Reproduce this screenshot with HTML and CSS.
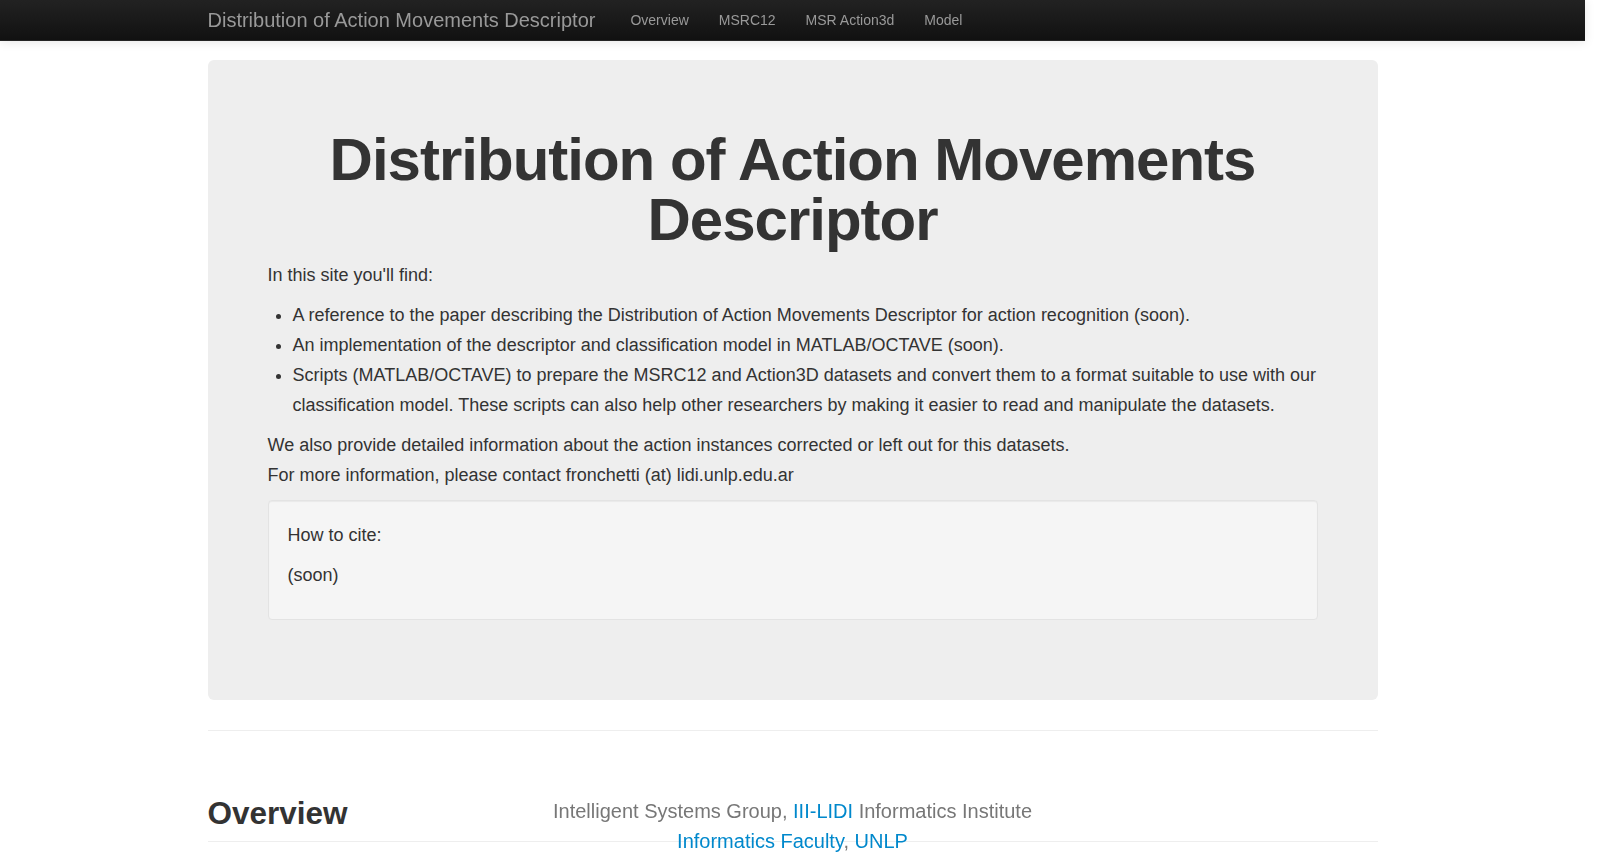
FILE: index.html
```html
<!doctype html>
<html lang="en">
<head>
<meta charset="UTF-8">
<title>Distribution of Action Movements Descriptor</title>
<link rel="stylesheet" href="styles.css">
</head>
<body>
	<div class="navbar">   <!-- barra superior fija -->
		<div class="navbar-inner">
			<div class="container">
				<a class="brand" href="#">Distribution of Action Movements Descriptor</a>
				<ul class="nav">
					<li><a href="#overview">Overview</a></li>
					<li><a href="#msrc12">MSRC12</a></li>
					<li><a href="#action3d">MSR Action3d</a></li>
					<li><a href="#model">Model</a></li>
				</ul>
			</div>
		</div>
	</div>

	<div class="container">

		<div class="hero-unit">
			<h1>Distribution of Action Movements Descriptor</h1>
			<p>In this site you'll find:</p>
			<ul>
				<li>A reference to the paper describing the Distribution of Action Movements Descriptor for action recognition (soon).</li>
				<li>An implementation of the descriptor and classification model in MATLAB/OCTAVE (soon).</li>
				<li>Scripts (MATLAB/OCTAVE) to prepare the MSRC12 and Action3D datasets and convert them to a format suitable to use with our classification model. These scripts can also help other researchers by making it easier to read and manipulate the datasets.</li>
			</ul>
			<p>We also provide detailed information about the action instances corrected or left out for this datasets.<br/>
			For more information, please contact fronchetti (at) lidi.unlp.edu.ar</p>
			<div class="well">
				<p>How to cite:</p>
				<p>(soon)</p>
			</div>
		</div>

		<hr/>

		<section id="overview" class="section">
			<div class="page-header"><h2>Overview</h2></div>
		</section>
		<section id="msrc12" class="section">
			<div class="page-header"><h2>MSRC12</h2></div>
		</section>
		<section id="action3d" class="section">
			<div class="page-header"><h2>MSR Action3d</h2></div>
		</section>
		<section id="model" class="section">
			<div class="page-header"><h2>Model</h2></div>
		</section>

	</div>

	<div class="footer">  <!-- pie fijo abajo -->
		<p class="lead">Intelligent Systems Group, <a href="#">III-LIDI</a> Informatics Institute<br/>
		<a href="#">Informatics Faculty</a>, <a href="#">UNLP</a></p>
	</div>
</body>
</html>
```

FILE: styles.css
```css
html,body,p,ul,h1,h2{ margin:0;padding:0; }
body{ padding:60px 15px 0 0;font:14px/20px "Liberation Sans",Arial,Helvetica,sans-serif;color:#333;background:#fff; }
a{ color:#0088cc;text-decoration:none; }
.container{ width:1170px;margin:0 auto; }

/* navbar */
.navbar{ position:fixed;top:0;left:0;right:15px;z-index:1030; }
.navbar-inner{ min-height:40px;background:#1b1b1b;background-image:linear-gradient(to bottom,#222,#111);border-bottom:1px solid #252525;box-shadow:0 1px 10px rgba(0,0,0,.1); }
.navbar .container{ display:flex;align-items:center; }
.brand{ display:block;padding:10px 20px;margin-left:-20px;font-size:20px;line-height:20px;color:#999; }
.nav{ display:flex;list-style:none; }
.nav a{ display:block;padding:10px 15px;font-size:14px;line-height:20px;color:#999; }

/* hero */
.hero-unit{ padding:60px;margin-bottom:30px;background:#eee;border-radius:6px;font-size:18px;line-height:30px; }
.hero-unit h1{ margin:10px 0;font-size:60px;line-height:60px;font-weight:bold;letter-spacing:-1px;text-align:center;color:#333; }
.hero-unit p{ margin:0 0 10px; }
.hero-unit ul{ margin:0 0 10px 25px; }
.well{ min-height:20px;padding:19px;margin-bottom:20px;background:#f5f5f5;border:1px solid #e3e3e3;border-radius:4px;box-shadow:inset 0 1px 1px rgba(0,0,0,.05); }

hr{ margin:20px 0;border:0;border-top:1px solid #eee;border-bottom:1px solid #fff; }

/* secciones */
.section{ padding-top:41px;min-height:390px; }
.page-header{ padding-bottom:8px;border-bottom:1px solid #eee; }
.page-header h2{ font-size:31.5px;line-height:40px;font-weight:bold;color:#333; }

/* footer */
.footer{ position:fixed;left:0;right:15px;bottom:5px;text-align:center; }
.lead{ font-size:20px;line-height:30px;color:#777; }
```
